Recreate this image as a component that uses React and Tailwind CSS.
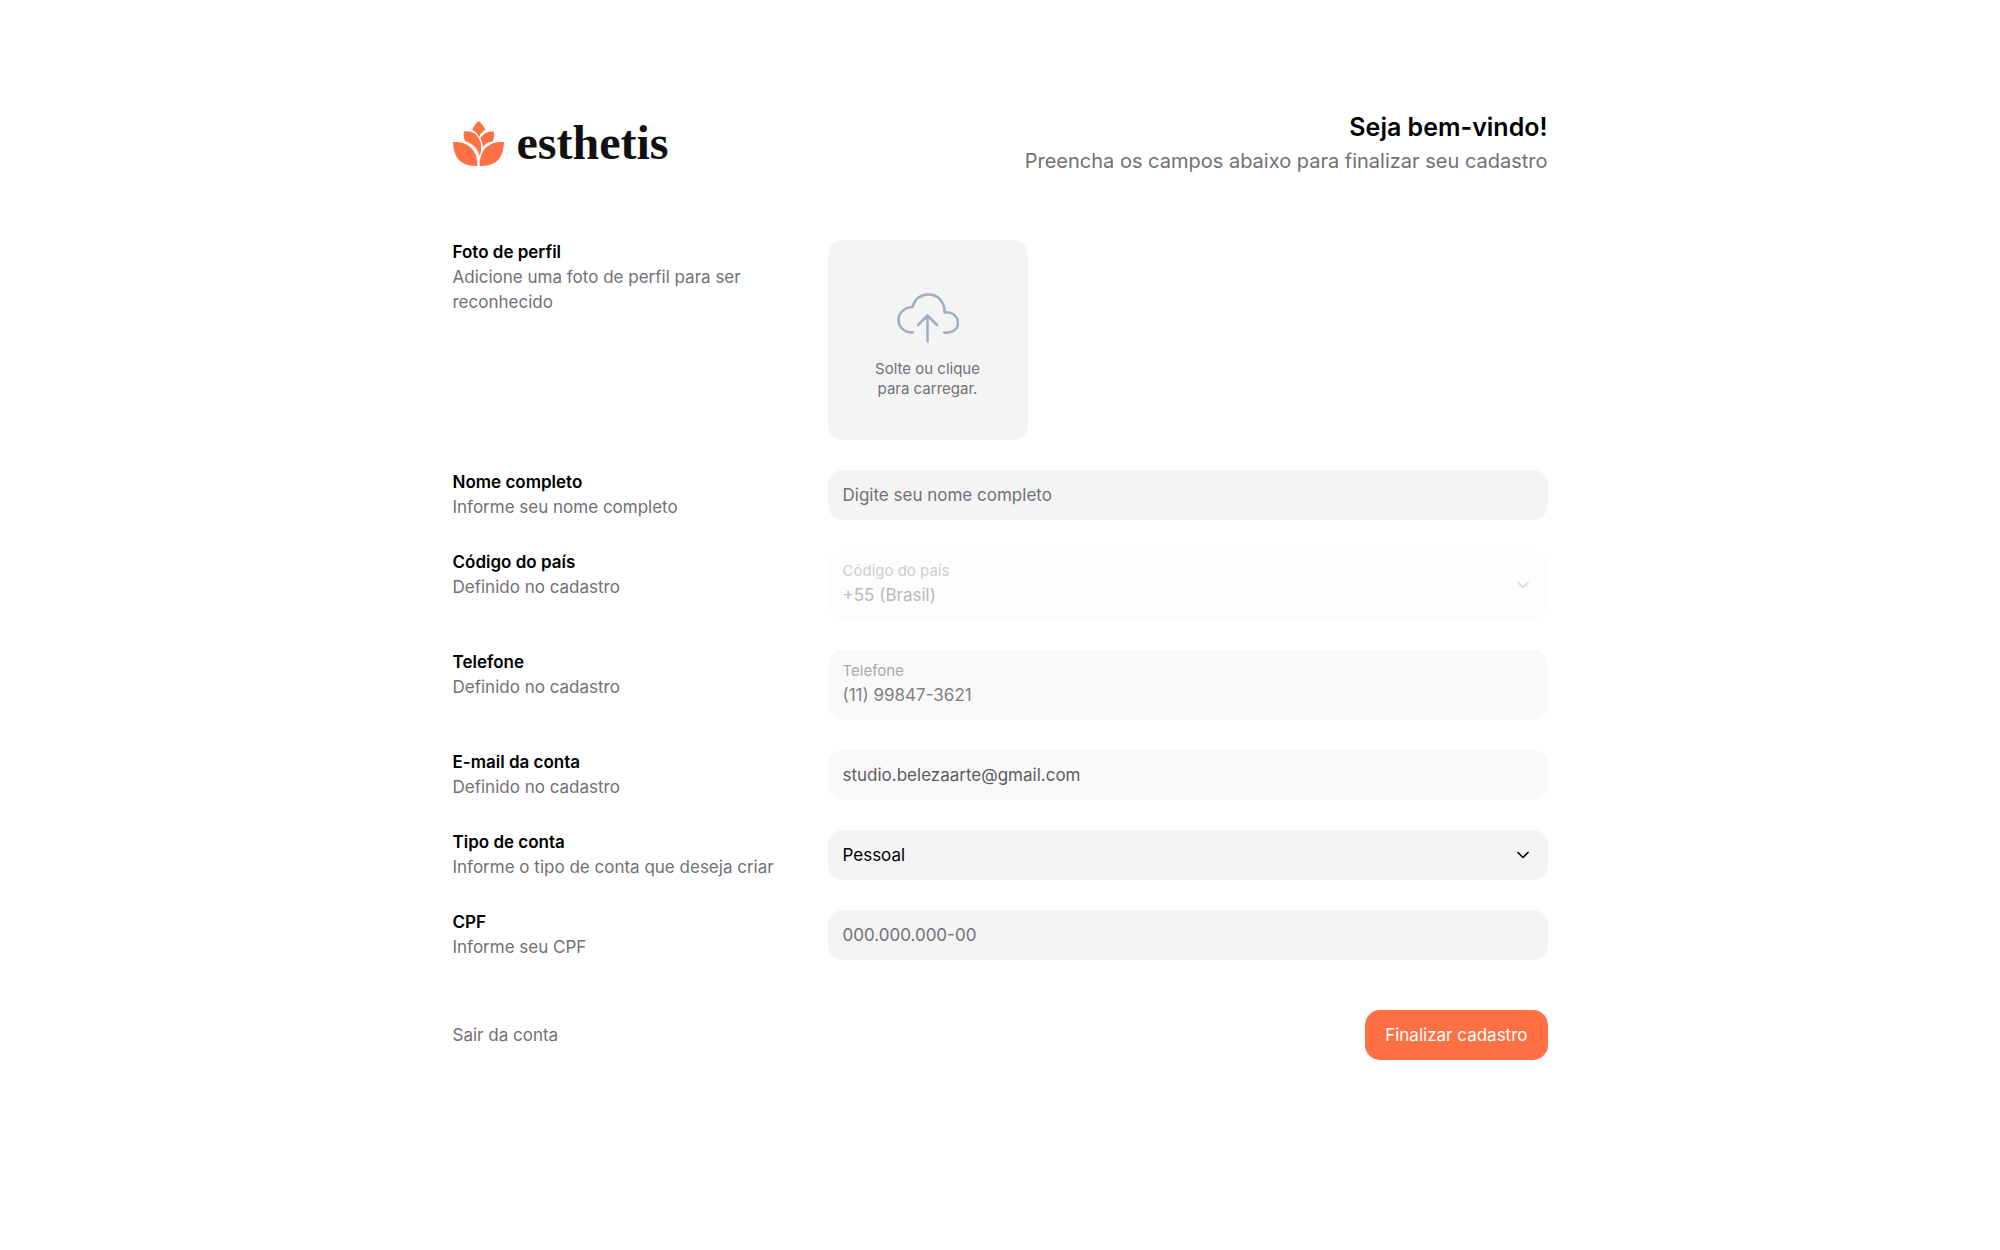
import React, { useState } from 'react';
import { ChevronDown } from 'lucide-react';

const fieldBase = "block w-full rounded-[15px] px-[15px] text-[17px] leading-[25px] outline-none";

function Logo() {
    return (
        <a href="#" className="flex items-center gap-[13px]">
            <svg className="h-[45px] w-[51px] text-[#ff7145]" viewBox="13 21 153 135" fill="currentColor" aria-hidden="true">
                <path d="M90 21C82 28 75 37 71 48C81 53 87 60 91 69C95 60 101 53 110 48C106 37 98 28 90 21Z" />
                <path d="M46 53C60 50 75 54 84 64C95 76 99 91 97 107C97 113 95 119 93 125C87 105 74 90 50 82C45 73 43 63 46 53Z" />
                <path d="M135 53C138 63 136 73 132 82C119 85 110 90 102 99C102 88 99 80 95 73C103 59 119 51 135 53Z" />
                <path d="M13 84C37 82 60 90 72 107C83 121 87 138 86 156C65 156 47 152 33 140C20 128 14 108 13 84Z" />
                <path d="M166 84C142 82 119 90 106 107C96 121 92 138 93 156C113 156 132 152 146 140C159 128 165 108 166 84Z" />
            </svg>
            <span className="font-['Liberation_Serif',serif] text-[48px] leading-[50px] font-bold text-[#111111]">esthetis</span>
        </a>
    );
}

function Row({ id, title, description, children }) {
    return (
        <div className="grid grid-cols-1 gap-x-[35px] gap-y-3 md:grid-cols-[340px_minmax(0,1fr)]">
            <div className="text-[17px] leading-[25px]">
                <label htmlFor={id} className="block font-semibold">{title}</label>
                <p className="text-[#717175]">{description}</p>
            </div>
            <div>{children}</div>
        </div>
    );
}

export default function App() {
    const [accountType, setAccountType] = useState('pessoal');

    return (
        <main className="min-h-screen bg-white px-6 py-[109px] font-[Inter,sans-serif] text-black">
            <form className="mx-auto max-w-[1095px]" onSubmit={(e) => e.preventDefault()}>
                <header className="mb-[63px] flex flex-wrap items-center justify-between gap-6">
                    <Logo />
                    <div className="md:text-right">
                        <h1 className="text-[25px] leading-[36px] font-semibold">Seja bem-vindo!</h1>
                        <p className="text-[20px] leading-[32px] text-[#717175]">Preencha os campos abaixo para finalizar seu cadastro</p>
                    </div>
                </header>

                <div className="flex flex-col gap-[30px]">
                    <Row id="foto" title="Foto de perfil" description="Adicione uma foto de perfil para ser reconhecido">
                        <label
                            htmlFor="foto"
                            className="flex size-[200px] cursor-pointer flex-col items-center justify-center gap-4 rounded-[15px] bg-[#f4f4f5] pt-3 text-center text-[15px] leading-5 text-[#717175]"
                        >
                            <svg className="h-[50px] w-[62px]" viewBox="0 0 62 50" fill="none" stroke="#9fafc0" strokeWidth="2.500" strokeLinecap="round" strokeLinejoin="round" aria-hidden="true">
                                <path d="M16 39.500C7 39.500 1.500 34 1.500 27C1.500 20 7 14.500 15.500 14C18 6 24 1.500 31.500 1.500C41 1.500 48 9 47.500 19.500C55 18.500 61 23 61 30C61 36.500 55 40.500 47 39.500" />
                                <path d="M30.500 48.500V23M21 32L30.500 22.500L40 32" />
                            </svg>
                            <span>Solte ou clique<br />para carregar.</span>
                            <input id="foto" type="file" accept="image/*" className="sr-only" />
                        </label>
                    </Row>

                    <Row id="nome" title="Nome completo" description="Informe seu nome completo">
                        <input id="nome" type="text" placeholder="Digite seu nome completo" className={`${fieldBase} h-[50px] bg-[#f4f4f5] placeholder:text-[#717175]`} />
                    </Row>

                    {/* Campos bloqueados, definidos no cadastro */}
                    <Row id="pais" title="Código do país" description="Definido no cadastro">
                        <div className="relative flex h-[70px] flex-col justify-center rounded-[15px] bg-[#fdfdfd] pb-1 text-[#b8b8ba]">
                            <label htmlFor="pais" className="px-[15px] text-[15px] leading-[25px] text-[#cdcdcf]">Código do país</label>
                            <select id="pais" disabled className={`${fieldBase} appearance-none opacity-100`}>
                                <option>+55 (Brasil)</option>
                            </select>
                            <ChevronDown className="pointer-events-none absolute top-1/2 right-[15px] size-5 -translate-y-1/2 text-[#d8d8da]" strokeWidth={2} />
                        </div>
                    </Row>

                    <Row id="telefone" title="Telefone" description="Definido no cadastro">
                        <div className="flex h-[70px] flex-col justify-center rounded-[15px] bg-[#f9f9f9] pb-1 text-[#808082]">
                            <label htmlFor="telefone" className="px-[15px] text-[15px] leading-[25px] text-[#a8a8aa]">Telefone</label>
                            <input id="telefone" type="tel" disabled defaultValue="(11) 99847-3621" className={fieldBase} />
                        </div>
                    </Row>

                    <Row id="email" title="E-mail da conta" description="Definido no cadastro">
                        <input id="email" type="email" readOnly defaultValue="studio.belezaarte@gmail.com" className={`${fieldBase} h-[50px] bg-[#f9f9f9] text-[#5c5c5f]`} />
                    </Row>

                    <Row id="tipo" title="Tipo de conta" description="Informe o tipo de conta que deseja criar">
                        <div className="relative">
                            <select
                                id="tipo"
                                value={accountType}
                                onChange={(e) => setAccountType(e.target.value)}
                                className={`${fieldBase} h-[50px] appearance-none bg-[#f4f4f5]`}
                            >
                                <option value="pessoal">Pessoal</option>
                                <option value="empresarial">Empresarial</option>
                            </select>
                            <ChevronDown className="pointer-events-none absolute top-1/2 right-[15px] size-5 -translate-y-1/2" strokeWidth={2} />
                        </div>
                    </Row>

                    <Row id="cpf" title="CPF" description="Informe seu CPF">
                        <input id="cpf" type="text" inputMode="numeric" placeholder="000.000.000-00" className={`${fieldBase} h-[50px] bg-[#f4f4f5] placeholder:text-[#717175]`} />
                    </Row>
                </div>

                <footer className="mt-[50px] flex items-center justify-between text-[17px] leading-[25px]">
                    <a href="#" className="text-[#717175]">Sair da conta</a>
                    <button type="submit" className="h-[50px] rounded-[15px] bg-[#ff7145] px-5 text-white">Finalizar cadastro</button>
                </footer>
            </form>
        </main>
    );
}
